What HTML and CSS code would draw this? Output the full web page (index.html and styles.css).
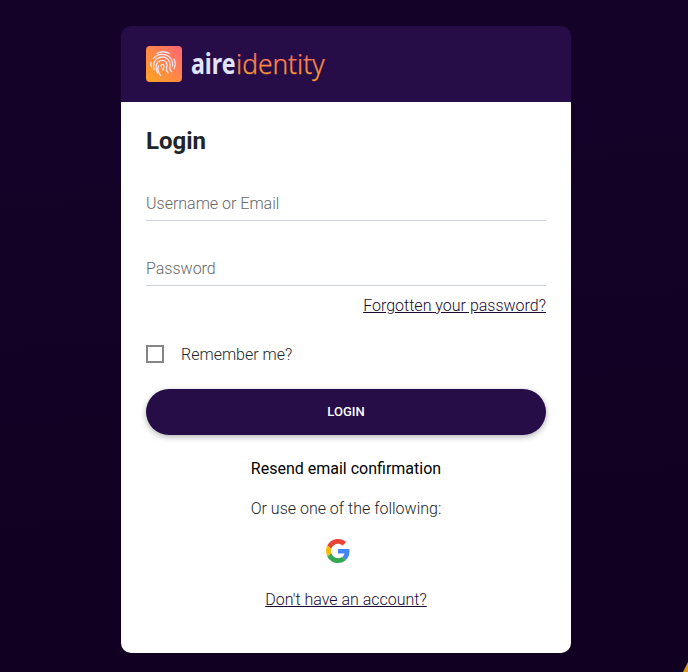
FILE: index.html
```
<!DOCTYPE html>
<html lang="en">
<head>
<meta charset="utf-8">
<title>Login</title>
<link rel="stylesheet" href="styles.css">
</head>
<body>
<main class="card">
  <header class="brand">
    <svg class="mark" viewBox="0 0 36 36" aria-hidden="true">
      <defs><linearGradient id="tile" x1="0" y1="1" x2="1" y2="0"><stop offset="0" stop-color="#fca521"/><stop offset=".5" stop-color="#ff8747"/><stop offset="1" stop-color="#ff6379"/></linearGradient></defs>
      <rect width="36" height="36" rx="4" fill="url(#tile)"/>
      <g fill="none" stroke="#eee5f4" stroke-width="1.300" stroke-linecap="round">
        <path d="M11 7.500Q17 4 23.500 7.500"/>
        <path d="M7.500 12.500Q10 8.800 15 8.300Q22.500 8 25.500 13.500Q27 17 26.500 20"/>
        <path d="M5 16.500Q4.500 19 5.500 21"/>
        <path d="M8 23.500Q6.500 16 11 12.800Q16 9.500 20.800 12.300Q24.500 15.500 23.800 20Q23.500 24 25.500 25.500"/>
        <path d="M11.500 27Q8.500 19.500 12 16Q16.500 12.800 20 16Q22 18.500 20.500 21.500Q20 24.500 22 27"/>
        <path d="M14.500 29.500Q10.500 24 12.500 20"/>
        <path d="M15 20Q15.500 17.500 17.500 18.800Q18.800 20.500 17 22.500V24"/>
        <path d="M28 13Q30.500 17.500 28 22.500"/>
      </g>
    </svg>
    <svg class="wordmark" viewBox="0 0 136 36">
      <defs><linearGradient id="word" gradientUnits="userSpaceOnUse" x1="0" y1="5" x2="0" y2="33"><stop offset="0" stop-color="#ff6a70"/><stop offset=".75" stop-color="#fb9632"/><stop offset="1" stop-color="#fca32a"/></linearGradient></defs>
      <text class="aire" x="0" y="27.500" textLength="44.500" lengthAdjust="spacingAndGlyphs">aire</text>
      <text class="identity" x="45" y="27.500" textLength="88.500" lengthAdjust="spacingAndGlyphs">identity</text>
    </svg>
  </header>
  <form class="form">
    <h1>Login</h1>
    <input class="field" type="text" placeholder="Username or Email">
    <input class="field" type="password" placeholder="Password">
    <a class="forgot">Forgotten your password?</a>
    <label class="remember"><span class="box"></span>Remember me?</label>
    <button class="submit" type="button">LOGIN</button>
    <a class="resend">Resend email confirmation</a>
    <p class="alternative">Or use one of the following:</p>
    <svg class="google" viewBox="0 0 48 48" role="img" aria-label="Google">
      <path fill="#EA4335" d="M24 9.500c3.540 0 6.710 1.220 9.210 3.600l6.850-6.850C35.900 2.380 30.470 0 24 0 14.620 0 6.510 5.380 2.560 13.220l7.980 6.190C12.430 13.720 17.740 9.500 24 9.500z"/>
      <path fill="#4285F4" d="M46.980 24.550c0-1.570-.15-3.090-.38-4.550H24v9.020h12.940c-.58 2.960-2.260 5.480-4.780 7.180l7.730 6c4.510-4.180 7.090-10.360 7.090-17.650z"/>
      <path fill="#FBBC05" d="M10.530 28.590c-.48-1.450-.76-2.990-.76-4.590s.27-3.140.76-4.590l-7.980-6.190C.92 16.460 0 20.120 0 24s.92 7.540 2.560 10.780l7.970-6.190z"/>
      <path fill="#34A853" d="M24 48c6.480 0 11.930-2.130 15.890-5.810l-7.730-6c-2.150 1.450-4.920 2.300-8.160 2.300-6.260 0-11.570-4.220-13.470-9.910l-7.980 6.190C6.510 42.620 14.620 48 24 48z"/>
    </svg>
    <a class="signup">Don't have an account?</a>
  </form>
</main>
<svg class="corner" viewBox="0 0 5 10" aria-hidden="true"><path d="M5 0V10H0Z" fill="#d99a20"/></svg>
</body>
</html>
```
FILE: styles.css
```
* { box-sizing: border-box; }
body {
  margin: 0;
  height: 672px;
  padding: 26px 117px 19px 121px;
  overflow: hidden;
  background: linear-gradient(175deg, #150229, #110021);
  font: 300 16px/24px Roboto, sans-serif;
  color: #212529;
}
.card {
  display: flex;
  flex-direction: column;
  width: 450px;
  height: 627px;
}
.brand {
  display: flex;
  align-items: center;
  gap: 9px;
  height: 76px;
  padding: 0 25px;
  border-radius: 10px 10px 0 0;
  background: #260d47;
}
.mark { width: 36px; height: 36px; }
.wordmark { width: 136px; height: 36px; overflow: visible; }
.aire, .identity { font-family: "Noto Sans", sans-serif; font-size: 28px; }
.aire { font-weight: 700; fill: #e2e4ff; }
.identity { font-weight: 300; fill: url(#word); stroke: url(#word); stroke-width: .25px; }
.form {
  flex: 1;
  display: flex;
  flex-direction: column;
  padding: 24px 25px 0;
  border-radius: 0 0 10px 10px;
  background: #fff;
}
h1 { margin: 0; font-size: 24px; line-height: 30px; font-weight: 700; }
.field {
  height: 36px;
  margin-top: 29px;
  padding: 2px 0 0;
  border: 0;
  border-bottom: 1px solid #ced4da;
  font: inherit;
  background: transparent;
}
.field::placeholder { color: #666; opacity: 1; }
.forgot { align-self: flex-end; margin-top: 8px; }
.forgot, .signup { color: #1b0931; text-decoration: underline; }
.remember { display: flex; align-items: center; gap: 17px; margin-top: 25px; }
.box { width: 18px; height: 18px; margin-bottom: 2px; border: 2px solid #858585; }
.submit {
  height: 46px;
  margin-top: 22px;
  border: 0;
  border-radius: 23px;
  background: #260d47;
  box-shadow: 0 2px 6px rgba(0, 0, 0, .3);
  color: #fff;
  font: 500 13px/18px Roboto, sans-serif;
}
.resend { align-self: center; margin-top: 22px; font-weight: 400; color: #000; }
.alternative { align-self: center; margin: 16px 0 0; }
.google { align-self: center; width: 24px; height: 24px; margin: 18px 16px 0 0; }
.signup { align-self: center; margin-top: 25px; }
.corner { position: absolute; right: 0; bottom: 0; width: 5px; height: 10px; }
```
